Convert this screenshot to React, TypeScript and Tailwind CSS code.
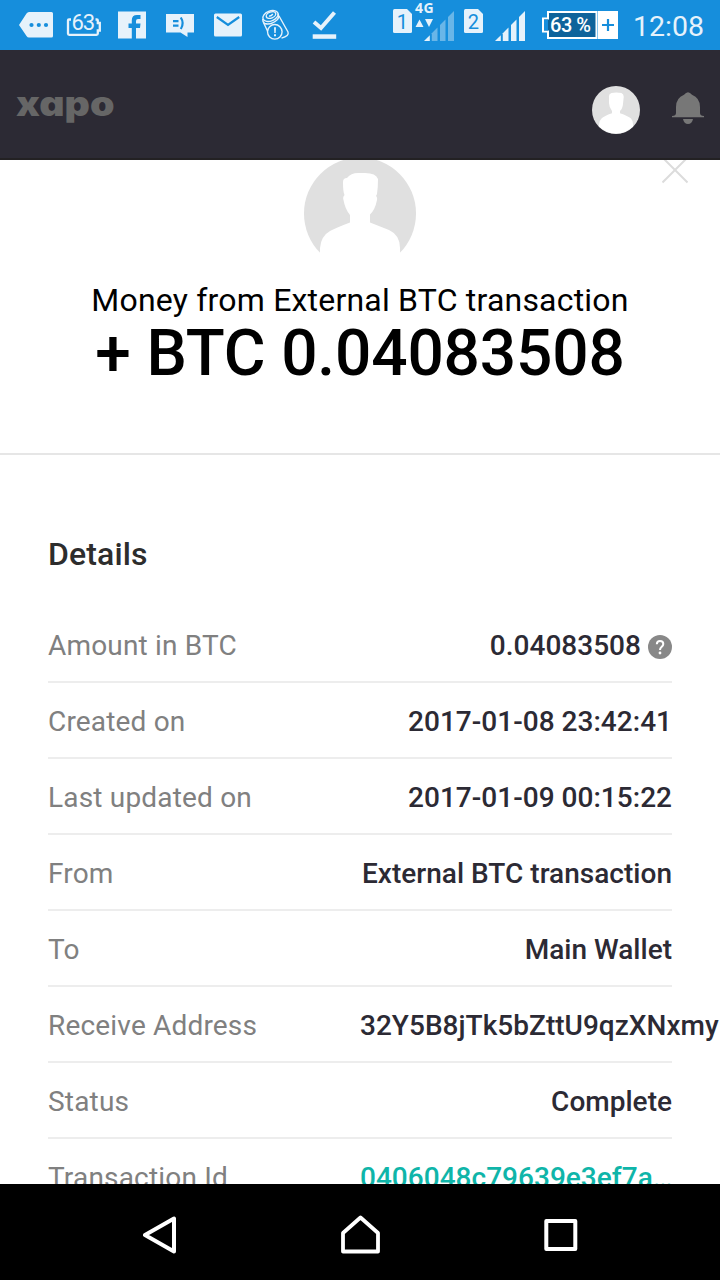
import type { ReactNode } from 'react';

type Detail = {
	label: string;
	value: string;
	help?: boolean;
	overflow?: boolean;
	link?: boolean;
};

const details: Detail[] = [
	{ label: 'Amount in BTC', value: '0.04083508', help: true },
	{ label: 'Created on', value: '2017-01-08 23:42:41' },
	{ label: 'Last updated on', value: '2017-01-09 00:15:22' },
	{ label: 'From', value: 'External BTC transaction' },
	{ label: 'To', value: 'Main Wallet' },
	{ label: 'Receive Address', value: '32Y5B8jTk5bZttU9qzXNxmy', overflow: true },
	{ label: 'Status', value: 'Complete' },
	{ label: 'Transaction Id', value: '0406048c79639e3ef7a…', link: true }
];

function Slot({ children }: { children: ReactNode }) {
	return (
		<svg className="w-12 h-[50px] shrink-0" fill="#e6f2fb" viewBox="0 0 48 50">
			{children}
		</svg>
	);
}

function Notifications() {
	return (
		<div className="flex ml-3">
			<Slot>
				<path d="M7 25 L14.5 13.5 Q15.5 12 17 12 H39.5 Q41 12 41 13.5 V36 Q41 37.5 39.5 37.5 H17 Q15.5 37.5 14.5 36 Z" />
				<g fill="#168edc">
					<circle cx="19.5" cy="25" r="2.1" />
					<circle cx="26.8" cy="25" r="2.1" />
					<circle cx="34" cy="25" r="2.1" />
				</g>
			</Slot>
			<Slot>
				<path
					d="M11 19.5 H9 Q8 19.5 8 20.5 V33.5 Q8 34.8 9.2 34.8 H36.5 Q37.8 34.8 37.8 33.5 V30.5 H39.8 V23 H37.8 V20.5 Q37.8 19.5 36.8 19.5 H35.5"
					fill="none"
					stroke="#e6f2fb"
					strokeWidth="2.3"
				/>
				<text
					fontFamily="Roboto, sans-serif"
					fontSize="22"
					textAnchor="middle"
					textLength="23.5"
					x="23.3"
					y="30"
				>
					63
				</text>
			</Slot>
			<Slot>
				<path d="M10 11.5 H38 V38.5 H28 V28 H32 L32.5 23.5 H28 V21 Q28 19 30 19 H32.5 V15 H29 Q23.8 15 23.8 20.3 V23.5 H20.5 V28 H23.8 V38.5 H10 Z" />
			</Slot>
			<Slot>
				<path d="M10 14 H38 V32.5 H31.5 V37 L24.5 32.5 H10 Z" />
				<g fill="none" stroke="#168edc" strokeWidth="2.2">
					<path d="M17 21.2 H22.5 M17 25.7 H22.5" />
					<path d="M24.8 17.5 Q28.5 23.2 24.8 29" />
				</g>
			</Slot>
			<Slot>
				<rect height="23" rx="1.5" width="28" x="10" y="13.5" />
				<path d="M12.8 17 L24 25 L35.2 17" fill="none" stroke="#168edc" strokeWidth="2.2" />
			</Slot>
			<Slot>
				<g fill="none" stroke="#e6f2fb" strokeWidth="1.4">
					<ellipse cx="18.5" cy="16" rx="8" ry="5" transform="rotate(-22 18.5 16)" />
					<ellipse cx="19" cy="15" rx="5" ry="3" transform="rotate(-22 19 15)" />
					<path d="M17 15.8 Q19 16.5 20.8 14" />
					<path d="M10.7 19 Q10.5 22 12.5 23.5 Q19 25.5 25.5 19.5 Q27.5 17 26 13.5" />
					<path d="M11.5 22.5 L15.5 31 M27 16 L36 32 Q37.5 36 29.5 38.2" />
					<circle cx="22.8" cy="31.8" r="7.3" />
				</g>
				<path d="M22 27.3 H24 L23.7 33 H22.3 Z M22 34.3 H24 V36.2 H22 Z" />
			</Slot>
			<Slot>
				<path d="M14 22 L21 28 L34.5 12.5" fill="none" stroke="#e6f2fb" strokeWidth="4" />
				<rect height="4.5" width="23.5" x="12.7" y="34.3" />
			</Slot>
		</div>
	);
}

function Sim({ label }: { label: string }) {
	return (
		<svg className="w-[19px] h-6 mt-[9px] shrink-0" viewBox="0 0 19 24">
			<path
				d="M1.5 0 H14 L19 5 V22.5 Q19 24 17.5 24 H1.5 Q0 24 0 22.5 V1.5 Q0 0 1.5 0 Z"
				fill="#e6f2fb"
			/>
			<text
				fill="#168edc"
				fontFamily="Roboto, sans-serif"
				fontSize="20"
				textAnchor="middle"
				x="9.3"
				y="19.5"
			>
				{label}
			</text>
		</svg>
	);
}

function Signal({ dim }: { dim?: boolean }) {
	return (
		<svg className="w-[30px] h-[30px] shrink-0" fill="#e6f2fb" viewBox="0 0 30 30">
			<path d="M0 30 L5.8 24.2 V30 Z" />
			<g opacity={dim ? 0.4 : 1}>
				<path d="M7.8 22.2 L13.5 16.5 V30 H7.8 Z" />
				<path d="M16 14 L21.5 8.5 V30 H16 Z" />
				<path d="M24 6 L30 0 V30 H24 Z" />
			</g>
		</svg>
	);
}

function StatusBar() {
	return (
		<header className="flex h-[50px] shrink-0 bg-[#168edc] text-[#e6f2fb]">
			<Notifications />
			<div className="flex ml-[45px]">
				<Sim label="1" />
				<div className="w-5 ml-[3px]">
					<p className="font-['Open_Sans'] font-bold text-[14px] leading-[16px] tracking-[0.4px]">
						4G
					</p>
					<svg className="w-[18px] h-[8px] mt-[3px]" fill="#e6f2fb" viewBox="0 0 18 8">
						<path d="M0.5 8 L4.5 0.5 L8.5 8 Z M10 0 H18 L14 8 Z" />
					</svg>
				</div>
				<div className="mt-[11px] -ml-[11px]">
					<Signal dim />
				</div>
				<div className="flex ml-[10px]">
					<Sim label="2" />
				</div>
				<div className="mt-[11px] ml-[12px]">
					<Signal />
				</div>
			</div>
			<svg className="w-[77px] h-[28px] mt-[11px] ml-[17px] shrink-0" viewBox="0 0 77 28">
				<path
					d="M6 1 H54.5 V27 H6 V20.5 H1 V7.5 H6 Z"
					fill="#0e639b"
					stroke="#fff"
					strokeWidth="2"
				/>
				<path d="M2 8.5 H6 V19.5 H2 Z" fill="#168edc" />
				<rect fill="#fff" height="28" width="20" x="56" />
				<path d="M60 14 H72 M66 8 V20" stroke="#168edc" strokeWidth="2.2" />
				<text
					fill="#fff"
					fontFamily="Roboto, sans-serif"
					fontSize="20"
					fontWeight="500"
					textLength="41"
					x="8"
					y="20.7"
				>
					63 %
				</text>
			</svg>
			<p className="ml-[14px] text-[28.5px] leading-[53px]">12:08</p>
		</header>
	);
}

function TopBar() {
	return (
		<div className="flex h-[110px] shrink-0 bg-[#2c2a34] border-b-2 border-[#232123]">
			<p
				className="ml-4 mt-[32px] h-11 w-[88px] origin-left scale-x-[1.155] font-['Inter'] font-black text-[34px] leading-[44px] text-[#666] [font-feature-settings:'cv11']"
			>
				xapo
			</p>
			<svg className="w-12 h-12 mt-9 ml-auto" viewBox="592 86 48 48">
				<circle cx="616" cy="110" fill="#e0e0e0" r="24" />
				<path
					d="M609 97 Q608.5 94 611.5 93 Q616 92 621.5 93 Q624.3 94.5 623.6 98 L623 104 Q622.5 109 620 111 V113.3 Q628 116 631 118.5 Q633.5 121 633 126.5 A24 24 0 0 1 599 126.5 Q598.5 121 601.5 118.5 Q604 116 612 113.3 V111 Q609 107 609 103 Z"
					fill="#fff"
				/>
			</svg>
			<svg className="w-8 h-[33px] mt-[42px] ml-8 mr-4" fill="#777" viewBox="672 92 32 33">
				<path d="M684 94.8 Q688 89.5 692 94.8 Q700 98 700 107 V113 Q700 115.8 704 116 V117.3 H672 V116 Q676 115.8 676 113 V107 Q676 98 684 94.8 Z" />
				<path d="M683 119 H693 Q692 124 688 124 Q684 124 683 119 Z" />
			</svg>
		</div>
	);
}

function Summary() {
	return (
		<section className="relative h-[295px] shrink-0 border-b-2 border-[#e6e6e6] text-center text-black">
			<svg className="w-28 h-[110px] mx-auto" viewBox="304 160 112 110">
				<circle cx="360" cy="213.5" fill="#e0e0e0" r="56" />
				<path
					d="M343 182 Q343 178 347 178 Q351 173 358 173 H365 Q376 173 378 179 Q378 187 377 194 L376 196 Q377.5 197 377 200 Q375 210 370 214.5 V222.5 L389 230 Q400 235 400 248 V271 H320 V248 Q321 236 330 231 Q338 227 350 222.5 V215 Q345 209 343.5 200 Q342.5 197 344.5 195 Q343 192 343 182 Z"
					fill="#fff"
				/>
			</svg>
			<svg
				className="absolute top-0 right-8 w-[26px] h-6"
				fill="none"
				stroke="#dcdcdc"
				strokeWidth="2"
				viewBox="662 160 26 24"
			>
				<path d="M662.5 182.5 L687.5 157.5 M662.5 157.5 L687.5 182.5" />
			</svg>
			<p className="mt-[11px] text-[32px] leading-[38px] tracking-[0.2px]">
				Money from External BTC transaction
			</p>
			<h1 className="mt-px text-[64px] leading-[68px] font-medium whitespace-nowrap tracking-[-0.16px]">
				+ BTC 0.04083508
			</h1>
		</section>
	);
}

function DetailRow({ label, value, help, overflow, link }: Detail) {
	return (
		<li className="flex h-[76px] pt-1 shrink-0 items-center border-b-2 border-[#ededed] text-[28px] leading-[34px] whitespace-nowrap">
			<span className="w-[312px] shrink-0 text-[#808080] tracking-[0.18px]">{label}</span>
			<span
				className={`flex flex-1 items-center font-medium tracking-[0.02px] ${link ? 'text-[#0fb5a9]' : 'text-[#2c2a34]'} ${
					overflow || link ? '' : 'justify-end'
				}`}
			>
				{value}
				{help && (
					<svg className="w-6 h-6 ml-[7px] mt-[2px]" viewBox="0 0 24 24">
						<circle cx="12" cy="12" fill="#888" r="12" />
						<path
							d="M8.8 9.2 Q9 6 12 6 Q15.3 6 15.3 9 Q15.3 10.5 13.5 12 Q12 13.3 12 15"
							fill="none"
							stroke="#fff"
							strokeWidth="2"
						/>
						<circle cx="12" cy="18" fill="#fff" r="1.4" />
					</svg>
				)}
			</span>
		</li>
	);
}

function NavBar() {
	return (
		<nav className="flex h-24 shrink-0 items-center bg-black">
			<svg className="w-[34px] h-10 ml-[143px] mt-[6px]" viewBox="0 0 34 40">
				<path
					d="M2 20 L31 3.5 V36.5 Z"
					fill="none"
					stroke="#fff"
					strokeLinejoin="round"
					strokeWidth="4"
				/>
			</svg>
			<svg className="w-10 h-10 ml-[164px] mt-[6px]" viewBox="0 0 40 40">
				<path
					d="M2 36.5 V18 L19.5 2.5 L37 18 V36.5 Z"
					fill="none"
					stroke="#fff"
					strokeLinejoin="round"
					strokeWidth="3.8"
				/>
			</svg>
			<svg className="w-[34px] h-8 ml-[163px] mt-[6px]" viewBox="0 0 34 32">
				<rect
					fill="none"
					height="28"
					stroke="#fff"
					strokeLinejoin="round"
					strokeWidth="4"
					width="29"
					x="2.3"
					y="2"
				/>
			</svg>
		</nav>
	);
}

export default function App() {
	return (
		<div className="flex flex-col w-[720px] h-[1280px] overflow-hidden bg-white font-['Roboto',sans-serif]">
			<StatusBar />
			<TopBar />
			<main className="flex flex-col flex-1 min-h-0 overflow-hidden">
				<Summary />
				<section className="px-12 pt-20">
					<h2 className="text-[32px] leading-[38px] font-medium tracking-[0.12px] text-[#2d2d2d]">
						Details
					</h2>
					<ul className="mt-[34px]">
						{details.map(detail => (
							<DetailRow key={detail.label} {...detail} />
						))}
					</ul>
				</section>
			</main>
			<NavBar />
		</div>
	);
}
